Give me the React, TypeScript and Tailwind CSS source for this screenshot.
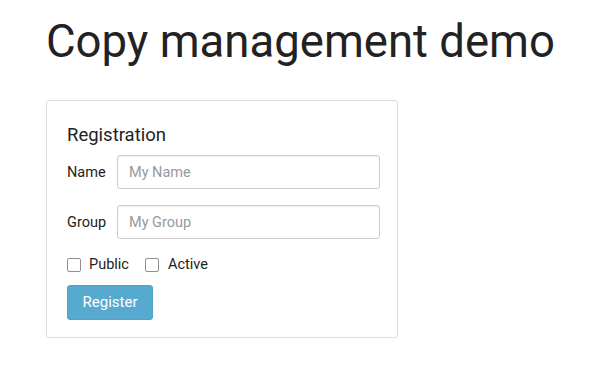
import React from "react";

export default function App() {
  return (
    <div
      className="min-h-[381px] bg-white pl-[46px] pt-[17px] text-[#333]"
      style={{ fontFamily: "Roboto, 'Noto Sans', sans-serif" }}
    >
      <h1 className="text-[45.5px] leading-[50px] font-normal text-[#222] m-0">
        Copy management demo
      </h1>
      <div className="mt-[33px] w-[352px] border border-[#ddd] rounded-[3px] pl-[20px] pr-[17px] pt-[24px] pb-[17px]">
        <h3 className="text-[18.5px] leading-[20px] font-normal text-[#222] mb-[10px]">
          Registration
        </h3>
        <div className="flex items-center">
          <label className="w-[50px] pt-[2px] text-[14.5px] text-[#222]">Name</label>
          <input
            className="w-[263px] h-[34px] border border-[#ccc] rounded-[3px] px-[11px] text-[14.5px] placeholder:text-[#999] outline-none shadow-[inset_0_1px_1px_rgba(0,0,0,0.075)]"
            placeholder="My Name"
          />
        </div>
        <div className="flex items-center mt-[16px]">
          <label className="w-[50px] pt-[2px] text-[14.5px] text-[#222]">Group</label>
          <input
            className="w-[263px] h-[34px] border border-[#ccc] rounded-[3px] px-[11px] text-[14.5px] placeholder:text-[#999] outline-none shadow-[inset_0_1px_1px_rgba(0,0,0,0.075)]"
            placeholder="My Group"
          />
        </div>
        <div className="flex items-center mt-[15px] text-[14.5px] text-[#222]">
          <span className="w-[14px] h-[14px] border border-[#8f8f8f] rounded-[2px] bg-white" />
          <span className="ml-[8px]">Public</span>
          <span className="ml-[16px] w-[14px] h-[14px] border border-[#8f8f8f] rounded-[2px] bg-white" />
          <span className="ml-[9px]">Active</span>
        </div>
        <button className="mt-[9px] h-[35px] w-[86px] rounded-[3px] bg-[#56a9cf] text-white text-[15px] border border-[#4fa3ca]">
          Register
        </button>
      </div>
    </div>
  );
}
